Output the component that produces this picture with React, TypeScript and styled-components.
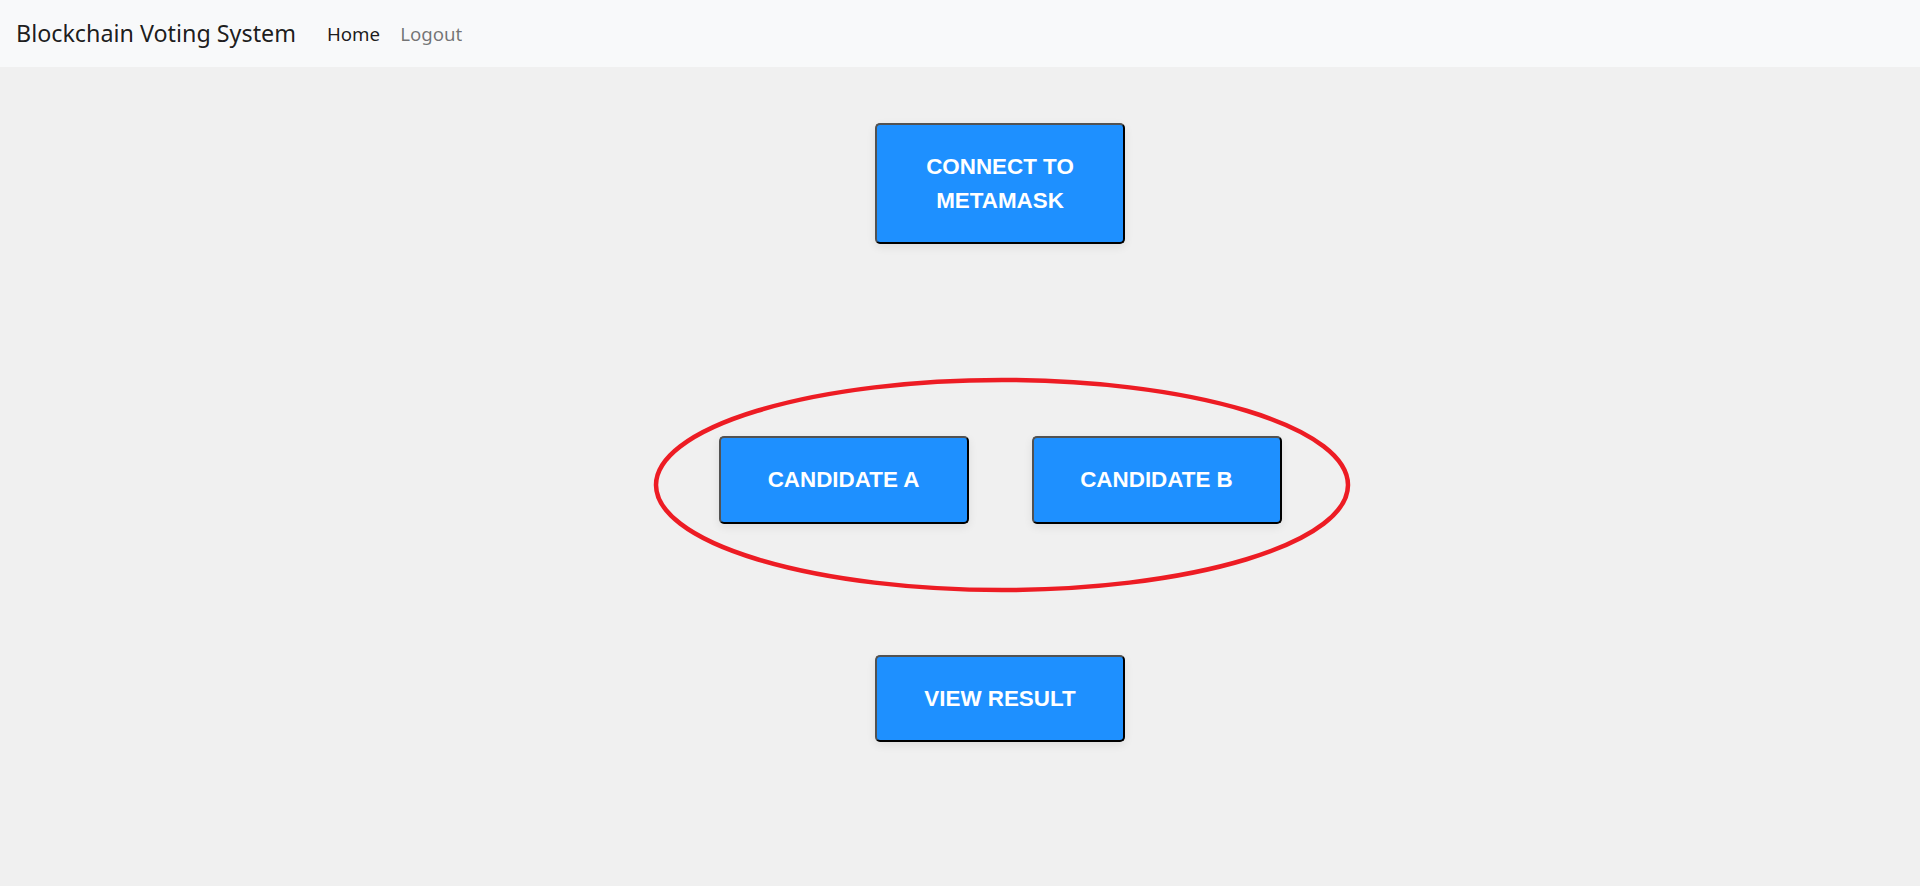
import React from "react";
import styled, { createGlobalStyle } from "styled-components";

const GlobalStyle = createGlobalStyle`
  html, body {
    margin: 0;
    padding: 0;
    background: #f0f0f0;
  }
  body {
    font-family: "Segoe UI", "Noto Sans", "Liberation Sans", sans-serif;
  }
  * { box-sizing: border-box; }
`;

const Page = styled.div`
  min-height: 886px;
  background: #f0f0f0;
`;

const NavBar = styled.nav`
  height: 67px;
  background: #f8f9fa;
  display: flex;
  align-items: center;
  padding: 0 16px;
`;

const Brand = styled.a`
  font-family: "Noto Sans", sans-serif;
  font-size: 23.3px;
  color: rgba(0, 0, 0, 0.9);
  text-decoration: none;
  margin-right: 21px;
  line-height: 1;
`;

const NavLink = styled.a<{ $active?: boolean }>`
  font-family: "Noto Sans", sans-serif;
  font-size: 18.7px;
  padding: 2px 10px 0;
  line-height: 1;
  color: ${(p) => (p.$active ? "rgba(0,0,0,0.9)" : "rgba(0,0,0,0.55)")};
  text-decoration: none;
`;

const Main = styled.main`
  display: flex;
  flex-direction: column;
  align-items: center;
  padding-left: 80px;
`;

const VoteButton = styled.button`
  width: 250px;
  padding: 25px 20px;
  background: #1e90ff;
  color: #fff;
  font-family: "Liberation Sans", Arial, sans-serif;
  font-weight: bold;
  font-size: 22.4px;
  line-height: 1.5;
  text-transform: uppercase;
  border-style: solid;
  border-width: 2px;
  border-color: #525252 #000 #000 #525252;
  border-radius: 5px;
  box-shadow: 0 3px 10px rgba(0, 0, 0, 0.08);
  cursor: pointer;
`;

const ConnectSection = styled.div`
  margin-top: 56px;
`;

const CandidateRow = styled.div`
  position: relative;
  display: flex;
  gap: 63px;
  margin-top: 192px;
`;

const Annotation = styled.svg`
  position: absolute;
  left: -69px;
  top: -61px;
  width: 704px;
  height: 218px;
  pointer-events: none;
  overflow: visible;
`;

const ResultSection = styled.div`
  margin-top: 131px;
`;

export default function App() {
  return (
    <Page>
      <GlobalStyle />
      <NavBar>
        <Brand href="#">Blockchain Voting System</Brand>
        <NavLink href="#" $active>
          Home
        </NavLink>
        <NavLink href="#">Logout</NavLink>
      </NavBar>
      <Main>
        <ConnectSection>
          <VoteButton>Connect to Metamask</VoteButton>
        </ConnectSection>
        <CandidateRow>
          <VoteButton>Candidate A</VoteButton>
          <VoteButton>Candidate B</VoteButton>
          <Annotation viewBox="0 0 704 218">
            <ellipse
              cx="352"
              cy="110"
              rx="346"
              ry="105"
              fill="none"
              stroke="#ed1c24"
              strokeWidth="4.5"
            />
          </Annotation>
        </CandidateRow>
        <ResultSection>
          <VoteButton>View Result</VoteButton>
        </ResultSection>
      </Main>
    </Page>
  );
}
